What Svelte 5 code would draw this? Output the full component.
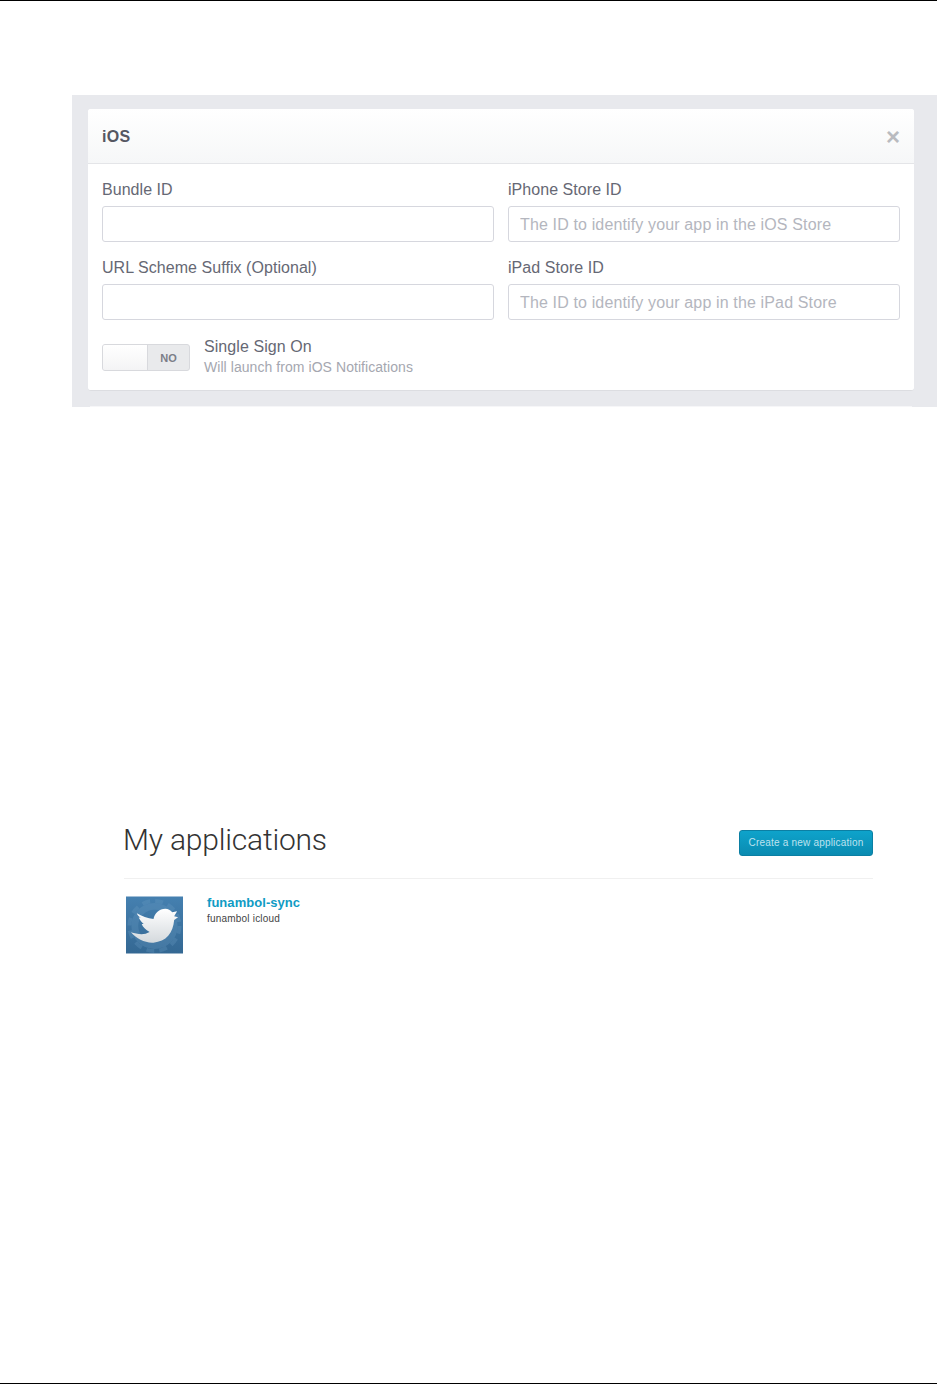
<script>
  const rows = [
    [{ label: 'Bundle ID', ph: '' }, { label: 'iPhone Store ID', ph: 'The ID to identify your app in the iOS Store' }],
    [{ label: 'URL Scheme Suffix (Optional)', ph: '' }, { label: 'iPad Store ID', ph: 'The ID to identify your app in the iPad Store' }]
  ];
</script>

<div class="page">
  <section class="panel">
    <div class="card">
      <header class="card-head">
        <h2>iOS</h2>
        <span class="close">×</span>
      </header>
      <div class="card-body">
        <div class="fields">
          {#each rows.flat() as f}
            <label class="field">
              <span class="lab">{f.label}</span>
              <input type="text" placeholder={f.ph} />
            </label>
          {/each}
        </div>
        <div class="sso">
          <div class="switch"><span class="knob"></span><span class="no">NO</span></div>
          <div class="sso-text">
            <div class="sso-title">Single Sign On</div>
            <div class="sso-sub">Will launch from iOS Notifications</div>
          </div>
        </div>
      </div>
    </div>
    <div class="next-card"></div>
  </section>

  <section class="apps">
    <div class="apps-head">
      <h1>My applications</h1>
      <button class="create">Create a new application</button>
    </div>
    <div class="app">
      <svg class="icon" viewBox="0 0 58 58" width="57" height="58" aria-hidden="true">
        <defs>
          <linearGradient id="bg" x1="0" y1="0" x2="0" y2="1">
            <stop offset="0" stop-color="#4580b0" />
            <stop offset="1" stop-color="#346893" />
          </linearGradient>
          <linearGradient id="bird" x1="0" y1="0" x2="0" y2="1">
            <stop offset="0" stop-color="#ffffff" />
            <stop offset="1" stop-color="#d4d9dd" />
          </linearGradient>
        </defs>
        <rect width="58" height="58" fill="url(#bg)" />
        <circle cx="29" cy="30" r="20" fill="none" stroke="#6b9cc3" stroke-opacity=".3" stroke-width="7" />
        <circle cx="29" cy="30" r="25.500" fill="none" stroke="#6b9cc3" stroke-opacity=".3" stroke-width="4" stroke-dasharray="8 5.350" />
        <path fill="url(#bird)" d="M11 17C16 20 22 22 28 23C29 17 34 12.500 40 12.500C43 12.500 45 14 47 16L52 15L49 20L53 21L49 24C48 37 41 46 28 47C19 47.500 11 43 5 36.500C10 38 15 39 20 38L24 36C20 34 17 31 16 28L18 28C15 25 13 22 13 21L15 22C13 20 11.500 19 11 17Z" />
      </svg>
      <div class="app-text">
        <div class="app-name">funambol-sync</div>
        <div class="app-desc">funambol icloud</div>
      </div>
    </div>
  </section>
</div>

<style>
  :global(body) { margin: 0; background: #fff; }
  .page {
    box-sizing: border-box;
    height: 1384px;
    border-top: 1px solid #000;
    border-bottom: 1px solid #000;
    font-family: "Liberation Sans", Arial, sans-serif;
    overflow: hidden;
  }
  .panel {
    margin: 94px 0 0 72px;
    padding: 14px 23px 0 16px;
    background: #e8e9ed;
    height: 312px;
    box-sizing: border-box;
  }
  .card {
    box-sizing: border-box;
    height: 282px;
    background: #fff;
    border-radius: 3px;
    border-bottom: 1px solid #dcdde1;
  }
  .card-head {
    box-sizing: border-box;
    height: 55px;
    padding: 0 14px;
    display: flex;
    align-items: center;
    justify-content: space-between;
    border-bottom: 1px solid #e4e5e8;
    background: linear-gradient(#fff, #f6f7f8);
    border-radius: 3px 3px 0 0;
  }
  h2 {
    margin: 2px 0 0;
    font-size: 16px;
    font-weight: 700;
    color: #555762;
    letter-spacing: .3px;
  }
  .close {
    font-size: 24px;
    font-weight: 700;
    line-height: 1;
    color: #b9bbc0;
    position: relative;
    top: 1px;
  }
  .card-body { padding: 14px 14px 0; }
  .fields {
    display: grid;
    grid-template-columns: 392px 392px;
    column-gap: 14px;
    row-gap: 14px;
  }
  .field { display: block; }
  .lab {
    display: block;
    height: 22px;
    line-height: 24px;
    margin-bottom: 6px;
    font-size: 16px;
    letter-spacing: .05px;
    color: #666874;
    white-space: nowrap;
  }
  input {
    display: block;
    box-sizing: border-box;
    width: 100%;
    height: 36px;
    padding: 2px 11px 0;
    border: 1px solid #d6d7de;
    border-radius: 3px;
    background: #fff;
    font: 16px "Liberation Sans", Arial, sans-serif;
    letter-spacing: .14px;
    outline: none;
  }
  input::placeholder { color: #b4b6be; opacity: 1; }
  .sso {
    display: flex;
    gap: 14px;
    margin-top: 15px;
  }
  .switch {
    box-sizing: border-box;
    margin-top: 9px;
    width: 88px;
    height: 27px;
    display: flex;
    border: 1px solid #d8d9dd;
    border-radius: 3px;
    background: #e9eaec;
    overflow: hidden;
  }
  .knob {
    width: 44px;
    background: linear-gradient(#fff, #f4f4f5);
    border-right: 1px solid #d8d9dd;
  }
  .no {
    flex: 1;
    text-align: center;
    font-size: 11px;
    font-weight: 700;
    line-height: 26px;
    color: #7c7e88;
  }
  .sso-title {
    margin-top: 1px;
    font-size: 16px;
    line-height: 22px;
    letter-spacing: .07px;
    color: #666874;
  }
  .sso-sub {
    font-size: 14px;
    line-height: 20px;
    margin-top: -1px;
    letter-spacing: .06px;
    color: #a5a7b0;
  }
  .next-card {
    height: 1px;
    margin: 15px 2px 0;
    background: #f6f6f8;
  }
  .apps {
    margin: 415px 64px 0 124px;
  }
  .apps-head {
    box-sizing: border-box;
    height: 57px;
    display: flex;
    justify-content: space-between;
    align-items: flex-start;
    border-bottom: 1px solid #f0f0f0;
  }
  h1 {
    margin: -1px 0 0 -1px;
    font-family: Roboto, "Liberation Sans", sans-serif;
    font-weight: 300;
    font-size: 30px;
    line-height: 38px;
    letter-spacing: -.2px;
    color: #333;
    white-space: nowrap;
  }
  .create {
    box-sizing: border-box;
    width: 134px;
    height: 26px;
    margin-top: 8px;
    padding: 0;
    border: 1px solid #0b7fa3;
    border-radius: 3px;
    background: linear-gradient(#0ea3cb, #0a8bb1);
    color: #bfe2ee;
    font: 10px/24px "Liberation Sans", Arial, sans-serif;
    letter-spacing: .2px;
  }
  .app {
    display: flex;
    margin-top: 17px;
    padding-left: 2px;
    gap: 24px;
  }
  .icon { display: block; flex: none; }
  .app-name {
    font-size: 13px;
    font-weight: 700;
    line-height: 14px;
    letter-spacing: .05px;
    color: #0f9bc4;
  }
  .app-desc {
    font-size: 10px;
    line-height: 14px;
    margin-top: 2px;
    letter-spacing: .2px;
    color: #444;
  }
</style>
